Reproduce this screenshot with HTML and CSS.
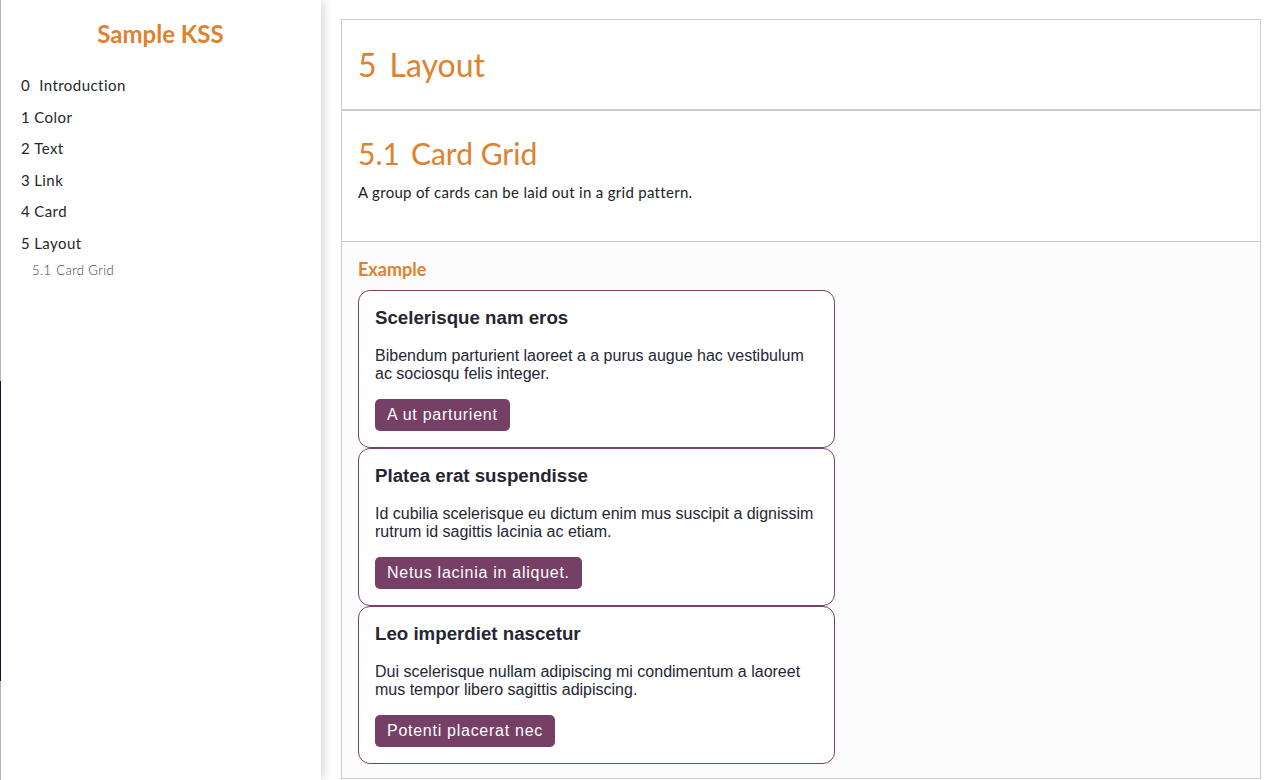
FILE: index.html
```html
<!DOCTYPE html>
<html lang="en">
<head>
<meta charset="utf-8">
<title>Sample KSS</title>
<link rel="stylesheet" href="styles.css">
</head>
<body>
<aside class="sidebar">
  <h1 class="brand">Sample KSS</h1>
  <ul class="nav">
    <li><span class="num num-wide">0</span>Introduction</li>
    <li><span class="num">1</span>Color</li>
    <li><span class="num">2</span>Text</li>
    <li><span class="num">3</span>Link</li>
    <li><span class="num">4</span>Card</li>
    <li><span class="num">5</span>Layout</li>
    <li class="sub"><span class="num num-wide">5.1</span>Card Grid</li>
  </ul>
</aside>
<main class="main">
  <div class="doc">
    <section class="sec sec-head">
      <h1 class="sec-title"><span class="ref">5</span>Layout</h1>
    </section>
    <section class="sec sec-desc">
      <h2 class="sub-title"><span class="ref">5.1</span>Card Grid</h2>
      <p class="desc">A group of cards can be laid out in a grid pattern.</p>
    </section>
    <section class="example">
      <h3 class="example-label">Example</h3>
      <div class="grid">
        <div class="card">
          <h4 class="card-title">Scelerisque nam eros</h4>
          <p class="card-text">Bibendum parturient laoreet a a purus augue hac vestibulum ac sociosqu felis integer.</p>
          <div class="card-actions"><a class="btn">A ut parturient</a></div>
        </div>
        <div class="card">
          <h4 class="card-title">Platea erat suspendisse</h4>
          <p class="card-text">Id cubilia scelerisque eu dictum enim mus suscipit a dignissim rutrum id sagittis lacinia ac etiam.</p>
          <div class="card-actions"><a class="btn">Netus lacinia in aliquet.</a></div>
        </div>
        <div class="card">
          <h4 class="card-title">Leo imperdiet nascetur</h4>
          <p class="card-text">Dui scelerisque nullam adipiscing mi condimentum a laoreet mus tempor libero sagittis adipiscing.</p>
          <div class="card-actions"><a class="btn">Potenti placerat nec</a></div>
        </div>
      </div>
    </section>
  </div>
</main>
</body>
</html>
```

FILE: styles.css
```css
html, body {
  margin: 0;
  padding: 0;
  height: 100%;
  overflow: hidden;
}

body {
  display: flex;
  background: #ffffff;
  font-family: Lato, "Liberation Sans", sans-serif;
  color: #333333;
}

.sidebar {
  flex: 0 0 321px;
  width: 321px;
  height: 780px;
  box-sizing: border-box;
  padding: 19px 0 0 21px;
  background-color: #ffffff;
  background-image: linear-gradient(to bottom, #b6b6a8 0, #b6b6a8 381px, #0b1622 381px, #0b1622 681px, #b6b6a8 681px);
  background-size: 1px 100%;
  background-repeat: no-repeat;
  box-shadow: 2px 0 10px rgba(0, 0, 0, 0.18);
  position: relative;
  z-index: 1;
}

.brand {
  margin: 0 21px 22px 0;
  text-align: center;
  font-size: 24px;
  line-height: 29px;
  font-weight: 700;
  color: #e0812f;
}

.nav {
  list-style: none;
  margin: 0;
  padding: 0;
}

.nav li {
  font-size: 15px;
  line-height: 31.5px;
  letter-spacing: 0.45px;
  color: #262626;
}

.nav .num {
  margin-right: 4px;
}

.nav .num-wide {
  margin-right: 9px;
}

.nav .sub {
  font-size: 13px;
  line-height: 22px;
  font-weight: 300;
  letter-spacing: 0.4px;
  color: #3a3a3a;
  padding-left: 11px;
}

.nav .sub .num {
  margin-right: 5px;
}

.main {
  flex: 1;
  padding: 19px 19px 0 20px;
  min-width: 0;
}

.doc {
  height: 760px;
  box-sizing: border-box;
  border: 1px solid #cccccc;
  display: flex;
  flex-direction: column;
}

.sec {
  padding: 0 16px;
  background: #ffffff;
}

.sec-head {
  padding-top: 26px;
  padding-bottom: 25px;
  border-bottom: 2px solid #cccccc;
}

.sec-title {
  margin: 0;
  font-size: 32px;
  line-height: 38px;
  font-weight: 400;
  color: #e0812f;
}

.ref {
  margin-right: 13px;
}

.sec-desc {
  padding-top: 24px;
  padding-bottom: 40px;
  border-bottom: 1px solid #cccccc;
}

.sub-title {
  margin: 0 0 12px;
  font-size: 30px;
  line-height: 36px;
  font-weight: 400;
  color: #e0812f;
}

.sub-title .ref {
  margin-right: 11px;
}

.desc {
  margin: 0;
  font-size: 15px;
  line-height: 18px;
  letter-spacing: 0.3px;
  color: #222222;
}

.example {
  flex: 1;
  background: #fcfcfc;
  padding: 16px 16px 0;
}

.example-label {
  margin: 0 0 10px;
  font-size: 18px;
  line-height: 22px;
  font-weight: 700;
  color: #e0812f;
}

.grid {
  display: grid;
  grid-template-columns: 477px;
  gap: 0;
}

.card {
  border: 1px solid #7a3f6c;
  border-radius: 12px;
  padding: 16px 16px 16px;
  background: #ffffff;
  font-family: "Liberation Sans", Arial, sans-serif;
  color: #262633;
}

.card-title {
  margin: 0 0 18px;
  font-size: 18.7px;
  line-height: 22px;
  font-weight: 700;
}

.card-text {
  margin: 0 0 16px;
  font-size: 16px;
  line-height: 18px;
}

.card-actions {
  display: flex;
}

.btn {
  display: block;
  padding: 7px 12px;
  font-size: 16px;
  line-height: 18px;
  color: #ffffff;
  background: #763f66;
  border-radius: 5px;
  letter-spacing: 0.73px;
}
```
